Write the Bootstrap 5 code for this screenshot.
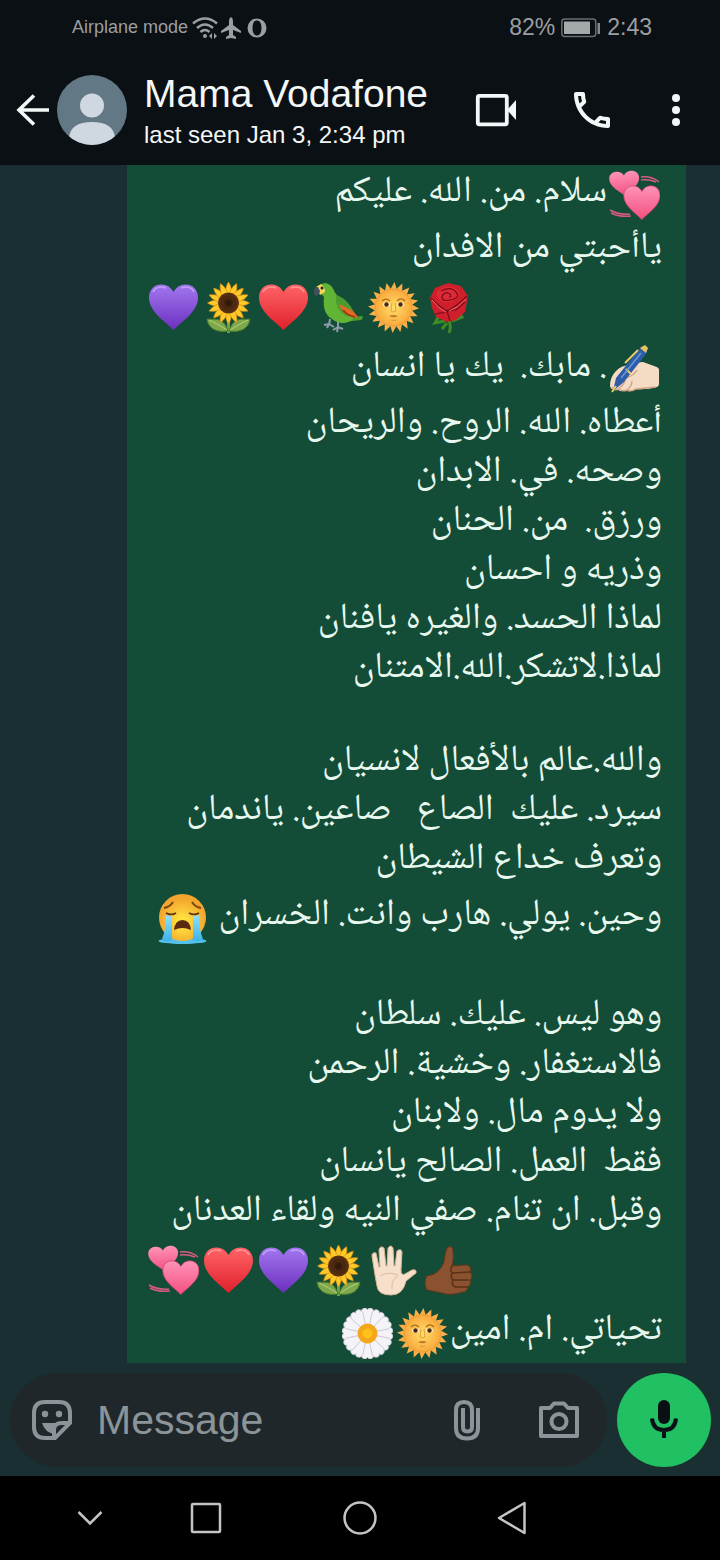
<!DOCTYPE html>
<html lang="en">
<head>
<meta charset="utf-8">
<meta name="viewport" content="width=device-width, initial-scale=1">
<title>Mama Vodafone</title>
<link href="https://cdn.jsdelivr.net/npm/bootstrap@5.3.0/dist/css/bootstrap.min.css" rel="stylesheet">
<style>
  body { background: #1a2f31; font-family: "Liberation Sans", Arial, sans-serif; }
  svg { display: block; flex: none; }
  .topbar { background: #0b1014; color: #f4f7f8; }
  .statusbar { height: 55px; padding: 0 68px 0 72px; color: #9b9fa1; font-size: 18px; }
  .statusbar .figures { font-size: 23px; gap: 6px; }
  .toolbar { height: 110px; padding: 0 34px 0 13px; }
  .icon-btn { background: none; border: 0; padding: 0; color: inherit; display: flex; align-items: center; justify-content: center; flex: none; }
  .contact { margin-left: 17px; }
  .who { font-size: 39px; line-height: 50px; font-weight: 400; margin: 0; }
  .seen { font-size: 24px; line-height: 32px; }
  .actions { gap: 50px; }
  .chat { padding: 0 34px 0 127px; overflow: hidden; }
  .bubble { background: #144d37; color: #e9f8ef; padding: 0 24px 2px 19px; margin-top: -5px;
    font-family: "Noto Naskh Arabic UI", "Noto Naskh Arabic", "Noto Sans Arabic", "DejaVu Sans", sans-serif; font-size: 37px; }
  .verse { margin: 0; line-height: 49px; height: 49px; white-space: pre; }
  .verse.tall { line-height: 63px; height: 63px; }
  .verse.blank { height: 44px; }
  .verse svg { display: inline-block; width: 51px; height: 51px; margin: 0 2px; vertical-align: -15px; }
  .composer { padding: 10px 9px 9px 10px; gap: 10px; }
  .pill { background: #20272a; border-radius: 47px; height: 94px; min-width: 0; padding: 0 27px 0 21px; color: #8b9498; }
  .pill input { background: none; border: 0; outline: 0; color: #e9edef; font-size: 41px; line-height: 48px; padding: 0; margin-left: 24px; width: 0; }
  .pill input::placeholder { color: #8b9498; opacity: 1; }
  .tools { gap: 57px; }
  .mic { width: 94px; height: 94px; background: #21c063; color: #0b1014; }
  .sysnav { background: #000; color: #c4c4c4; height: 84px; display: grid; grid-template-columns: 32fr 116fr 116fr 192fr 112fr 152fr; }
</style>
</head>
<body class="d-flex flex-column min-vh-100">

<svg width="0" height="0" class="position-absolute" aria-hidden="true">
  <defs>
    <linearGradient id="gRed" x1="0" y1="0" x2="0" y2="1"><stop offset="0" stop-color="#ff6468"/><stop offset="1" stop-color="#e0202b"/></linearGradient>
    <linearGradient id="gPurple" x1="0" y1="0" x2="0" y2="1"><stop offset="0" stop-color="#a277ee"/><stop offset="1" stop-color="#6c2fc0"/></linearGradient>
    <linearGradient id="gPink" x1="0" y1="0" x2="0" y2="1"><stop offset="0" stop-color="#ff93b8"/><stop offset="1" stop-color="#f2507f"/></linearGradient>
    <radialGradient id="gSun"><stop offset="0" stop-color="#ffdf6a"/><stop offset="1" stop-color="#f9a93c"/></radialGradient>
    <radialGradient id="gFace" cy=".6"><stop offset=".2" stop-color="#ffe03e"/><stop offset="1" stop-color="#f3a52e"/></radialGradient>
    <radialGradient id="gSeed"><stop offset="0" stop-color="#2b1608"/><stop offset="1" stop-color="#5e3312"/></radialGradient>
    <linearGradient id="gTear" x1="0" y1="0" x2="0" y2="1"><stop offset="0" stop-color="#8fe0ff"/><stop offset="1" stop-color="#3bb4e8"/></linearGradient>
    <path id="heartShape" d="M25.500 48C18 40 1 30 1 15.500 1 7 7 2.500 13.500 2.500c5.500 0 9.500 3 12 7.500 2.500-4.500 6.500-7.500 12-7.500C44 2.500 50 7 50 15.500 50 30 33 40 25.500 48z"/>
    <path id="ray" d="M22 8 26.500 0 29 8z"/>
    <g id="rays4"><use href="#ray"/><use href="#ray" transform="rotate(90 25.500 25.500)"/><use href="#ray" transform="rotate(180 25.500 25.500)"/><use href="#ray" transform="rotate(270 25.500 25.500)"/></g>
    <path id="petal" d="M25.500 21C21 14 22 5 25.500 0 29 5 30 14 25.500 21z"/>
    <g id="petals4"><use href="#petal"/><use href="#petal" transform="rotate(90 25.500 21)"/><use href="#petal" transform="rotate(180 25.500 21)"/><use href="#petal" transform="rotate(270 25.500 21)"/></g>
    <path id="dpetal" d="M25.500 25 19 5C19-1 25-1 25.500 2 26-1 32-1 32 5z" stroke="#b9bccb" stroke-width=".7"/>
    <g id="dpetals4"><use href="#dpetal"/><use href="#dpetal" transform="rotate(90 25.500 25.500)"/><use href="#dpetal" transform="rotate(180 25.500 25.500)"/><use href="#dpetal" transform="rotate(270 25.500 25.500)"/></g>
  </defs>
  <symbol id="e-red" viewBox="0 0 51 51"><use href="#heartShape" fill="url(#gRed)"/><path d="M5 10c2-5 8-6 13-4M33 6c5-2 11-1 13 4" stroke="#ffb0ae" stroke-width="1.500" fill="none" opacity=".7"/></symbol>
  <symbol id="e-purple" viewBox="0 0 51 51"><use href="#heartShape" fill="url(#gPurple)"/><path d="M5 10c2-5 8-6 13-4M33 6c5-2 11-1 13 4" stroke="#ceb8ff" stroke-width="1.500" fill="none" opacity=".7"/></symbol>
  <symbol id="e-pink" viewBox="0 0 51 51">
    <path d="M32 7c8-1 13 1 18 5M32 10c7-1 10 0 15 2M1 40c5 3 11 5 20 4M2 43c6 3 12 4 20 3" stroke="#d95a80" stroke-width="1.500" fill="none"/>
    <use href="#heartShape" fill="url(#gPink)" transform="translate(0 0) rotate(-4 15 14) scale(.61 .54)"/>
    <use href="#heartShape" fill="url(#gPink)" stroke="#c43e68" stroke-width="1" transform="translate(14 14) scale(.74)"/>
  </symbol>
  <symbol id="e-sun" viewBox="0 0 51 51">
    <g fill="#f9b04a"><use href="#rays4"/><use href="#rays4" transform="rotate(18 25.500 25.500)"/><use href="#rays4" transform="rotate(36 25.500 25.500)"/><use href="#rays4" transform="rotate(54 25.500 25.500)"/><use href="#rays4" transform="rotate(72 25.500 25.500)"/></g>
    <circle cx="25.500" cy="25.500" r="18.500" fill="url(#gSun)" stroke="#ee9b35"/>
    <path d="M14 19q4-4 8 0M29 19q4-4 8 0" stroke="#b06a18" stroke-width="1.200" fill="none"/>
    <ellipse cx="18.500" cy="22.500" rx="3.500" ry="2.200" fill="#fff3d0"/><ellipse cx="32.500" cy="22.500" rx="3.500" ry="2.200" fill="#fff3d0"/>
    <circle cx="18.500" cy="22.500" r="2.200" fill="#4a2a10"/><circle cx="32.500" cy="22.500" r="2.200" fill="#4a2a10"/>
    <path d="M24 21l-1 8q2.500 2 5 0L27 21" stroke="#dd9430" stroke-width=".8" fill="none"/><path d="M21 34q4.500-2 9 0-4.500 2.500-9 0z" fill="#c1782c"/><path d="M23 38q2.500 1 5 0" stroke="#dd9430" fill="none"/>
  </symbol>
  <symbol id="e-sunflower" viewBox="0 0 51 51">
    <path d="M24 35h3v16h-3z" fill="#69a43c"/><path d="M25 49C20 34 12 38 4 37c1 9 9 14 21 12zM26 49c5-15 13-11 21-12-1 9-9 14-21 12z" fill="#7ea94b" stroke="#4c7d2c"/>
    <path d="M6 38q9 4 18 10M45 38q-9 4-18 10" stroke="#b5cf80" fill="none"/>
    <g fill="#ffc928" stroke="#d88c15" stroke-width=".6"><use href="#petals4"/><use href="#petals4" transform="rotate(22.500 25.500 21)"/><use href="#petals4" transform="rotate(45 25.500 21)"/><use href="#petals4" transform="rotate(67.500 25.500 21)"/></g>
    <circle cx="25.500" cy="21" r="10.500" fill="url(#gSeed)"/><circle cx="25.500" cy="21" r="5" fill="none" stroke="#6a3c18" stroke-dasharray="1 1"/>
  </symbol>
  <symbol id="e-daisy" viewBox="0 0 51 51">
    <g fill="#f4f4f8"><use href="#dpetals4"/><use href="#dpetals4" transform="rotate(30 25.500 25.500)"/><use href="#dpetals4" transform="rotate(60 25.500 25.500)"/></g>
    <circle cx="25.500" cy="25.500" r="10" fill="#f4a71d"/><circle cx="25.500" cy="25.500" r="5" fill="#ffc018"/>
  </symbol>
  <symbol id="e-parrot" viewBox="0 0 51 51">
    <path d="M31 36 49 34q2 2-1 4L31 40z" fill="#4d9a2a"/>
    <path d="M5 8C6 2 12-1 17 3c4 3 4 8 8 11 9 5 15 12 16 22-6 7-16 6-22 1C11 32 10 24 11 15z" fill="#62b534"/>
    <path d="M23 13c10 3 17 12 19 22l-8-1C25 30 22 22 23 13z" fill="#4b9c2e"/><path d="M26 22c2 7 7 11 17 14l2-1-5-6z" fill="#e56a25"/><path d="M30 28c3 4 7 6 12 7" stroke="#a8331b" stroke-width="2" fill="none"/>
    <path d="M3 5 8 2q4 3 4 8L7 13z" fill="#f5d65a"/><circle cx="9" cy="6" r="1.500" fill="#222"/><path d="M5 5C0 4 0 11 3 15c1-3 4-3 4-6z" fill="#43505e"/>
    <path d="M17 37l-1 6M25 40v6M11 43l5-1 5 3M14 46l2-4M20 48l5-3 5 2M24 50l1-5" stroke="#8f9caa" stroke-width="2" fill="none"/>
  </symbol>
  <symbol id="e-rose" viewBox="0 0 51 51">
    <path d="M25 36q4 8 1 15M22 39 12 41l4-7M29 39l10-4-3-4M24 41l-5 6" stroke="#3d8c26" stroke-width="3" fill="none"/>
    <path d="M7 16 12 6 25 1l13 3 7 10-3 16-9 8-9 2-11-5-4-9z" fill="#cf1f2b"/>
    <path d="M14 9q10-8 20-2 6 6-2 11-9 5-15 0-5-5-3-9z" fill="#dc2a37"/>
    <path d="M8 16q8 9 16 13 9-4 20-15M12 32q9-1 12-3l3 10M18 9q10-5 15 1t-6 8q-9 2-8-4 3-5 8-2 2 3-1 3M24 29l9-1 9-8" stroke="#7d0b18" stroke-width="1.200" fill="none"/>
    <path d="M9 18q7 9 14 12M43 17q-8 9-17 12" stroke="#f06a70" fill="none"/>
  </symbol>
  <symbol id="e-write" viewBox="0 0 51 51">
    <path d="M50 24Q49 22 45 21L34 17q-6 0-10 4-10-2-17 5-6 6-6 15 1 5 7 3 4 4 9 1 4 3 9-1 12 1 22-2 2-1 2-3z" fill="#f4dcc4"/><path d="M3 42q2 4 7 2 4 3 8 1 4 2 9-1l20-2M10 43q5-3 6-8M18 45q5-4 5-9M28 25q-3 6-12 8" stroke="#d1a486" stroke-width="1.400" fill="none"/>
    <path d="M31 3 36 0l3 3-2 6-22 28-11 9 3-13z" fill="#2d5da8"/><path d="M31 3 36 0l3 3-2 5z" fill="#e8c25e"/><path d="M29 5 16 18M17 24l5 5M3 47l4-6" stroke="#e9c968" stroke-width="2" fill="none"/><path d="M32 8 12 33" stroke="#6b97da" stroke-width="1.500"/>
  </symbol>
  <symbol id="e-cry" viewBox="0 0 51 51">
    <ellipse cx="25.500" cy="48" rx="24" ry="3" fill="#55c0ea"/><circle cx="25.500" cy="24.500" r="23.500" fill="url(#gFace)"/>
    <path d="M7 15q6-1 9-6M35 9q3 5 9 6" stroke="#79480f" stroke-width="2" fill="none"/><path d="M9 20q5 3 10 0M32 20q5 3 10 0" stroke="#5e360e" stroke-width="2" fill="none"/>
    <path d="M9 22q4 2 6 0v25q-6 3-10-1 4-9 4-24zM36 22q3 2 6 0 0 15 4 24-5 4-10 1z" fill="url(#gTear)"/>
    <path d="M17 37q1-10 8.500-10T34 37q-8.500-4-17 0z" fill="#5b2a10"/>
  </symbol>
  <symbol id="e-palm" viewBox="0 0 51 51">
    <path d="M7 30 4 11q0-4 4-3l3 14h1L11 5q1-5 5-2l2 18h1l1-18q3-4 5 0l1 18h1l2-15q4-3 5 1l-1 18q0 6 4 4l7-4q5-1 4 3L38 36q-3 14-15 14-13 0-14-9z" fill="#f6dfcb" stroke="#d9b496"/>
    <path d="M12 31q8-5 18-1M30 31q-7 4-6 13" stroke="#dfbb9e" fill="none"/>
  </symbol>
  <symbol id="e-thumb" viewBox="0 0 51 51">
    <path d="M4 31q13-2 17-14 1-9 3-14 5-4 6 3 1 7-1 15l15-1q5 2 3 7 4 4 0 8 2 4-2 7-1 5-5 5-12 4-21 1L4 45q-4-7 0-14z" fill="#8a5230" stroke="#643718"/>
    <path d="M29 21q-3 6 1 7l17-1M29 28q-2 6 2 7l15 0M30 35q-2 5 2 7l13 0" stroke="#5b3115" stroke-width="1.500" fill="none"/>
  </symbol>
</svg>

<header class="topbar">
  <div class="statusbar d-flex justify-content-between align-items-center">
    <div class="d-flex align-items-center">
      <span>Airplane mode</span>
      <svg width="28" height="24" viewBox="0 0 28 24" class="ms-1" fill="none" stroke="currentColor" stroke-width="2.500"><path d="M1 7.500q12-10 24 0M5 12q8-7 16 0M8.500 16q4.500-4 9 0"/><circle cx="13" cy="20" r="2" fill="currentColor" stroke="none"/><path d="m20 17-3 3 3 3zM22 17l3 3-3 3z" fill="currentColor" stroke="none"/></svg>
      <svg width="22" height="22" viewBox="0 0 22 22" fill="currentColor"><path d="M11 0q2 1 2 4v4l8 6v2l-8-3v5l3 2v2l-5-1-5 1v-2l3-2v-5l-8 3v-2l8-6V4q0-3 2-4z"/></svg>
      <svg width="22" height="20" viewBox="-1 0 22 20" class="ms-1" fill="currentColor" fill-rule="evenodd"><path d="M10 .5a9.500 9.500 0 1 0 0 19 9.500 9.500 0 0 0 0-19zm0 2c3 0 4.500 3 4.500 7.500S13 17.500 10 17.500 5.500 14.500 5.500 10 7 2.500 10 2.500z"/></svg>
    </div>
    <div class="figures d-flex align-items-center">
      <span>82%</span>
      <svg width="40" height="20" viewBox="0 0 40 20"><rect x=".8" y="1" width="34" height="17.500" rx="3" fill="none" stroke="#6a6e70" stroke-width="1.500"/><rect x="3" y="3.500" width="26" height="12.500" fill="#a6a9aa"/><path d="M36.500 5h2.500v11h-2.500z" fill="#85898b"/></svg>
      <span>2:43</span>
    </div>
  </div>
  <div class="toolbar d-flex align-items-center">
    <button class="icon-btn" type="button" aria-label="Back"><svg width="40" height="40" viewBox="0 0 40 40" fill="none" stroke="currentColor" stroke-width="3.600"><path d="M36 20H6M21 5.500 6 20l15 14.500"/></svg></button>
    <svg width="70" height="70" viewBox="0 0 70 70" class="ms-1" aria-hidden="true"><defs><clipPath id="disc"><circle cx="35" cy="35" r="35"/></clipPath></defs><circle cx="35" cy="35" r="35" fill="#627884"/><g fill="#cfd8e0" clip-path="url(#disc)"><circle cx="35" cy="30.500" r="12"/><path d="M12 62q2-15 23-15t23 15v8H12z"/></g></svg>
    <div class="contact flex-grow-1">
      <h1 class="who">Mama Vodafone</h1>
      <div class="seen">last seen Jan 3, 2:34 pm</div>
    </div>
    <div class="actions d-flex align-items-center">
      <button class="icon-btn" type="button" aria-label="Video call"><svg width="44" height="40" viewBox="0 0 44 40"><rect x="3.800" y="5.800" width="29" height="28.500" rx="1.500" fill="none" stroke="currentColor" stroke-width="3.800"/><path d="m33 20 9-10v20z" fill="currentColor"/></svg></button>
      <button class="icon-btn" type="button" aria-label="Voice call"><svg width="48" height="48" viewBox="0 0 24 24" fill="currentColor"><path d="M6.540 5c.06.89.21 1.760.45 2.590l-1.200 1.200c-.41-1.200-.67-2.470-.76-3.790h1.510m9.860 12.020c.85.24 1.720.39 2.600.45v1.490c-1.320-.09-2.590-.35-3.800-.75l1.200-1.190M7.500 3H4c-.55 0-1 .45-1 1 0 9.390 7.610 17 17 17 .55 0 1-.45 1-1v-3.490c0-.55-.45-1-1-1-1.240 0-2.450-.2-3.570-.57-.1-.04-.21-.05-.31-.05-.26 0-.51.1-.71.290l-2.200 2.200c-2.830-1.450-5.150-3.760-6.590-6.590l2.200-2.200c.28-.28.36-.67.25-1.020C8.700 6.450 8.500 5.250 8.500 4c0-.55-.45-1-1-1z"/></svg></button>
      <button class="icon-btn" type="button" aria-label="More options"><svg width="20" height="40" viewBox="0 0 20 40" fill="currentColor"><circle cx="10" cy="8" r="4"/><circle cx="10" cy="20" r="4"/><circle cx="10" cy="32" r="4"/></svg></button>
    </div>
  </div>
</header>

<main class="chat flex-grow-1">
  <article class="bubble" lang="ar" dir="rtl">
    <p class="verse tall"><svg role="img" aria-label="💞"><use href="#e-pink"/></svg>سلام. من. الله. عليكم</p>
    <p class="verse">ياأحبتي من الافدان</p>
    <p class="verse tall" dir="ltr"><svg role="img" aria-label="💜"><use href="#e-purple"/></svg><svg role="img" aria-label="🌻"><use href="#e-sunflower"/></svg><svg role="img" aria-label="❤"><use href="#e-red"/></svg><svg role="img" aria-label="🦜"><use href="#e-parrot"/></svg><svg role="img" aria-label="🌞"><use href="#e-sun"/></svg><svg role="img" aria-label="🌹"><use href="#e-rose"/></svg></p>
    <p class="verse tall"><svg role="img" aria-label="✍"><use href="#e-write"/></svg>. مابك.  يك يا انسان</p>
    <p class="verse">أعطاه. الله. الروح. والريحان</p>
    <p class="verse">وصحه. في. الابدان</p>
    <p class="verse">ورزق.  من. الحنان</p>
    <p class="verse">وذريه و احسان</p>
    <p class="verse">لماذا الحسد. والغيره يافنان</p>
    <p class="verse">لماذا.لاتشكر.الله.الامتنان</p>
    <p class="verse blank"></p>
    <p class="verse">والله.عالم بالأفعال لانسيان</p>
    <p class="verse">سيرد. عليك  الصاع   صاعين. ياندمان</p>
    <p class="verse">وتعرف خداع الشيطان</p>
    <p class="verse tall">وحين. يولي. هارب وانت. الخسران <svg role="img" aria-label="😭"><use href="#e-cry"/></svg></p>
    <p class="verse blank"></p>
    <p class="verse">وهو ليس. عليك. سلطان</p>
    <p class="verse">فالاستغفار. وخشية. الرحمن</p>
    <p class="verse">ولا يدوم مال. ولابنان</p>
    <p class="verse">فقط  العمل. الصالح يانسان</p>
    <p class="verse">وقبل. ان تنام. صفي النيه ولقاء العدنان</p>
    <p class="verse tall" dir="ltr"><svg role="img" aria-label="💞"><use href="#e-pink"/></svg><svg role="img" aria-label="❤"><use href="#e-red"/></svg><svg role="img" aria-label="💜"><use href="#e-purple"/></svg><svg role="img" aria-label="🌻"><use href="#e-sunflower"/></svg><svg role="img" aria-label="🤚"><use href="#e-palm"/></svg><svg role="img" aria-label="👍"><use href="#e-thumb"/></svg></p>
    <p class="verse tall">تحياتي. ام. امين<svg role="img" aria-label="🌞"><use href="#e-sun"/></svg><svg role="img" aria-label="🌼"><use href="#e-daisy"/></svg></p>
  </article>
</main>

<form class="composer d-flex align-items-center">
  <div class="pill d-flex align-items-center flex-grow-1">
    <button class="icon-btn" type="button" aria-label="Stickers"><svg width="42" height="42" viewBox="0 0 42 42" fill="none" stroke="currentColor" stroke-width="4"><path d="M14 3h14Q39 3 39 14v10L24 39H14Q3 39 3 28V14Q3 3 14 3z"/><path d="M23 39v-8q0-7 8-7h8"/><path d="M11 24h16l-3 5v6q-10-1-13-11z" fill="currentColor" stroke="none"/><g fill="currentColor" stroke="none"><circle cx="14" cy="15" r="3.200"/><circle cx="28" cy="15" r="3.200"/></g></svg></button>
    <input class="flex-grow-1" type="text" placeholder="Message" aria-label="Message">
    <div class="tools d-flex align-items-center">
      <button class="icon-btn" type="button" aria-label="Attach"><svg width="28" height="42" viewBox="0 0 28 42" fill="none" stroke="currentColor" stroke-width="4"><path d="M25 9v20q0 10.500-11 10.500T3 29V11q0-8 8-8t8 8v17q0 4.500-4.500 4.500T10 28V9"/></svg></button>
      <button class="icon-btn" type="button" aria-label="Camera"><svg width="42" height="40" viewBox="0 0 42 40" fill="none" stroke="currentColor" stroke-width="4" stroke-linejoin="round"><path d="M3 8h9l4-4.500h10L30 8h9v28H3z"/><circle cx="21" cy="21.500" r="7.500"/></svg></button>
    </div>
  </div>
  <button class="mic icon-btn rounded-circle" type="button" aria-label="Record voice message"><svg width="30" height="40" viewBox="0 0 30 40"><rect x="9" y="0" width="12" height="24" rx="6" fill="currentColor"/><path d="M3 18.500q1 11.500 12 11.500t12-11.500M15 30v8" fill="none" stroke="currentColor" stroke-width="4"/></svg></button>
</form>

<nav class="sysnav" aria-label="System">
  <span></span>
  <button class="icon-btn" type="button" aria-label="Hide keyboard"><svg width="30" height="30" viewBox="0 0 30 30" fill="none" stroke="currentColor" stroke-width="2.500"><path d="M3.500 9 15 20.500 26.500 9"/></svg></button>
  <button class="icon-btn" type="button" aria-label="Recent apps"><svg width="32" height="32" viewBox="0 0 32 32" fill="none" stroke="currentColor" stroke-width="2.500"><rect x="2" y="2" width="28" height="28" rx="1"/></svg></button>
  <button class="icon-btn" type="button" aria-label="Home"><svg width="34" height="34" viewBox="0 0 34 34" fill="none" stroke="currentColor" stroke-width="2.500"><circle cx="17" cy="17" r="15.500"/></svg></button>
  <button class="icon-btn" type="button" aria-label="Back"><svg width="32" height="36" viewBox="0 0 32 36" fill="none" stroke="currentColor" stroke-width="2.500" stroke-linejoin="round"><path d="M28.500 3v30L3 18z"/></svg></button>
  <span></span>
</nav>

<script src="https://cdn.jsdelivr.net/npm/bootstrap@5.3.0/dist/js/bootstrap.bundle.min.js"></script>
</body>
</html>
